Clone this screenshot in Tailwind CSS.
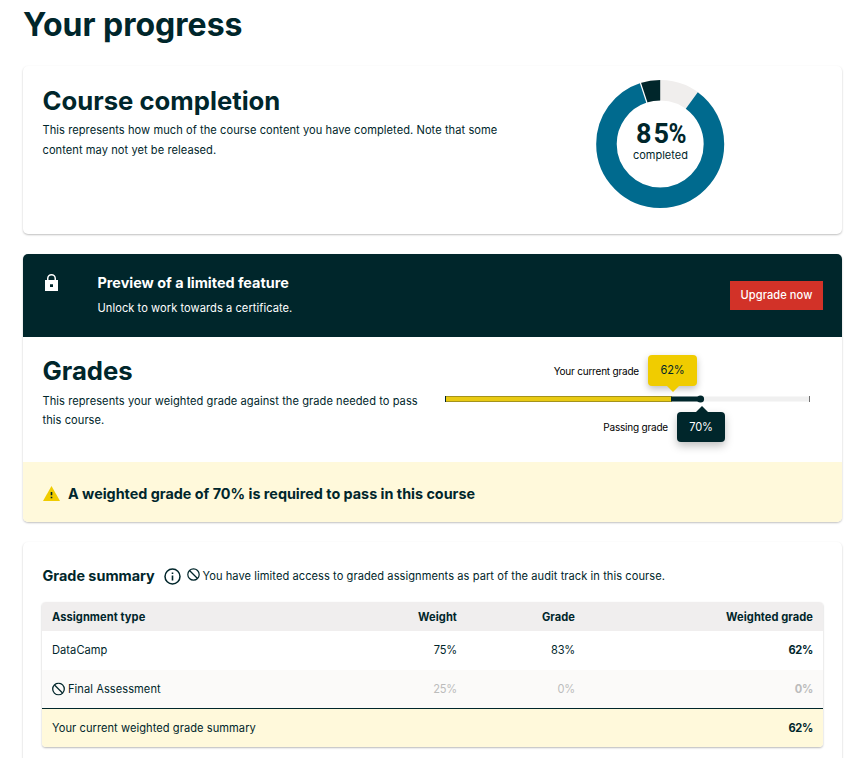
<!DOCTYPE html>
<html lang="en">
<head>
<meta charset="utf-8">
<title>Your progress</title>
<script src="https://cdn.jsdelivr.net/npm/@tailwindcss/browser@4"></script>
</head>
<body class="bg-white">
<main class="h-[758px] overflow-hidden bg-white pl-[23px] pr-[15px] font-['Inter',sans-serif] text-[11.1px] tracking-[0.06px] text-[#00262b]">
  <h1 class="h-[66px] pt-[5px] text-[32px] leading-[40px] font-bold tracking-normal whitespace-nowrap">Your progress</h1>

  <section class="flex h-[168px] rounded-[5px] bg-white pl-[19.5px] shadow-[0_1px_2px_rgba(0,0,0,0.25)]">
    <div class="w-[480px] pt-[19px]">
      <h2 class="text-[25.7px] leading-[32px] font-bold tracking-normal whitespace-nowrap">Course completion</h2>
      <p class="mt-[3px] leading-[20px] whitespace-nowrap">This represents how much of the course content you have completed. Note that some<br>content may not yet be released.</p>
    </div>
    <svg class="mt-[14px] ml-[73.5px] h-[128px] w-[128px] overflow-visible" viewBox="-64 -64 128 128">
      <g fill="none" stroke-width="20.5">
        <circle cx="0.200" r="53.75" stroke="#f0eeed"/>
        <circle r="53.75" stroke="#006a8e" pathLength="100" stroke-dasharray="85 15" stroke-dashoffset="-10" transform="translate(0.200 0) rotate(-90)"/>
        <circle r="53.75" stroke="#00262b" pathLength="100" stroke-dasharray="5 95" stroke-dashoffset="-95" transform="translate(0.200 0) rotate(-90)"/>
      </g>
      <path d="M-13 -41 L-19.900 -62" stroke="#fff" stroke-width="1.2"/>
      <text x="-24 -6.500" y="-1" fill="#00262b" class="font-['Roboto'] text-[27px] font-bold tracking-normal">85<tspan x="8.500" textLength="18" lengthAdjust="spacingAndGlyphs">%</tspan></text>
      <text x="0.400" y="15" text-anchor="middle" fill="#00262b" class="text-[11px] tracking-normal">completed</text>
    </svg>
  </section>

  <section class="mt-[20px] h-[268px] rounded-[5px] bg-white shadow-[0_1px_2px_rgba(0,0,0,0.25)]">
    <div class="flex h-[83px] rounded-t-[5px] bg-[#00262b] pr-[19px] text-white">
      <svg class="mt-[20px] ml-[22px] h-[17px] w-[13px] shrink-0" viewBox="0 0 13 17">
        <path fill-rule="evenodd" fill="#fff" d="M0 6H2V4.400a4.500 4.400 0 0 1 9 0V6h2v11H0zM3.500 6h6V4.500a3 3 0 0 0-6 0zM5 10.200v2.900h3v-2.900z"/>
      </svg>
      <div class="ml-[39.5px] flex-1 pt-[19px]">
        <h3 class="text-[14.4px] leading-[20px] font-bold tracking-normal whitespace-nowrap">Preview of a limited feature</h3>
        <p class="mt-[5px] leading-[20px] whitespace-nowrap">Unlock to work towards a certificate.</p>
      </div>
      <button class="mt-[27px] h-[29px] w-[93px] bg-[#d23228] font-medium whitespace-nowrap">Upgrade now</button>
    </div>
    <div class="flex h-[125px] pl-[19.5px]">
      <div class="w-[390px] pt-[18px]">
        <h2 class="text-[25.7px] leading-[32px] font-bold tracking-normal">Grades</h2>
        <p class="mt-[4.5px] leading-[19.5px] whitespace-nowrap">This represents your weighted grade against the grade needed to pass<br>this course.</p>
      </div>
      <div class="relative mt-[9px] ml-[12.5px] h-[107px] w-[365px]">
        <svg class="absolute inset-0 h-[107px] w-[365px]" viewBox="445 346 365 107">
          <path fill="#f0f0f0" d="M671 396.500h139v5H671z"/>
          <path fill="#e9ca13" stroke="#a4931c" stroke-width="1" d="M445.500 396.500h226v5h-226z"/>
          <path fill="#00262b" d="M445 396h1v6h-1zM671 396.500h30v5h-30z"/>
          <path fill="#707070" d="M809 396h1v6h-1z"/>
          <circle cx="700.500" cy="399" r="3.600" fill="#00262b"/>
        </svg>
        <span class="absolute top-[16px] right-[171px] text-[10px] leading-[18px] tracking-[-0.2px] whitespace-nowrap text-black">Your current grade</span>
        <div class="absolute top-[9px] left-[203px] flex h-[31px] w-[49px] items-center justify-center rounded-[4px] bg-[#f0cc00] tracking-[-0.2px] shadow-[0_3px_7px_rgba(0,0,0,0.25)]">62%
          <svg class="absolute top-[30px] left-[18px] h-[7px] w-[14px]" viewBox="0 0 14 7"><path fill="#f0cc00" d="M0 0h14L7 7z"/></svg>
        </div>
        <span class="absolute top-[72px] right-[142px] text-[10px] leading-[18px] tracking-[-0.2px] whitespace-nowrap text-black">Passing grade</span>
        <div class="absolute top-[66px] left-[232px] flex h-[30px] w-[48px] items-center justify-center rounded-[4px] bg-[#00262b] tracking-[-0.2px] text-white shadow-[0_4px_8px_rgba(0,0,0,0.25)]">70%
          <svg class="absolute -top-[6px] left-[18px] h-[7px] w-[14px]" viewBox="0 0 14 7"><path fill="#00262b" d="M0 7h14L7 0z"/></svg>
        </div>
      </div>
    </div>
    <div class="flex h-[60px] items-center rounded-b-[5px] bg-[#fff9db] pt-[4px] pl-[20px]">
      <svg class="h-[15px] w-[17px] -translate-y-px" viewBox="0 0 17 15"><path fill="#f0cc00" d="M8.500 0 17 15H0z"/><path fill="#00262b" d="M7.700 6h1.600v3.300H7.700zM7.700 10.700h1.600v1.600H7.700z"/></svg>
      <h3 class="ml-[8px] text-[14.37px] leading-[20px] font-bold tracking-normal whitespace-nowrap">A weighted grade of 70% is required to pass in this course</h3>
    </div>
  </section>

  <section class="mt-[20px] h-[240px] rounded-t-[5px] bg-white px-[19px] pt-[23px] shadow-[0_1px_2px_rgba(0,0,0,0.25)]">
    <div class="flex h-[22px] items-center">
      <h3 class="w-[122px] pl-[0.5px] text-[14.4px] font-bold tracking-normal whitespace-nowrap">Grade summary</h3>
      <svg class="h-[17px] w-[17px] shrink-0" viewBox="0 0 17 17"><circle cx="8.500" cy="8.500" r="7.500" fill="none" stroke="#00262b" stroke-width="1.500"/><path fill="#00262b" d="M7.700 4.500h1.600v1.600H7.700zM7.700 7.500h1.600v5H7.700z"/></svg>
      <svg class="ml-[6px] h-[13px] w-[13px] shrink-0 -translate-y-[2px]" viewBox="0 0 13 13"><circle cx="6.500" cy="6.500" r="5.700" fill="none" stroke="#00262b" stroke-width="1.200"/><path stroke="#00262b" stroke-width="1.200" d="M2.500 2.500l8 8"/></svg>
      <p class="ml-[2.5px] leading-[20px] whitespace-nowrap">You have limited access to graded assignments as part of the audit track in this course.</p>
    </div>
    <table class="mt-[15px] w-[781px] table-fixed border-separate border-spacing-0 overflow-hidden rounded-[4px] text-right leading-[18px] shadow-[0_1px_2px_rgba(0,0,0,0.28)]">
      <colgroup><col class="w-[300px]"><col class="w-[125px]"><col class="w-[118px]"><col class="w-[238px]"></colgroup>
      <thead class="bg-[#f0eeee] font-bold">
        <tr class="h-[29px]"><th class="pt-px pl-[10px] text-left">Assignment type</th><th class="pt-px pr-[10px]">Weight</th><th class="pt-px pr-[10px]">Grade</th><th class="pt-px pr-[10px]">Weighted grade</th></tr>
      </thead>
      <tbody>
        <tr class="h-[39px]"><td class="pb-px pl-[10px] text-left">DataCamp</td><td class="pr-[10px] pb-px tracking-[-0.2px]">75%</td><td class="pr-[10px] pb-px tracking-[-0.2px]">83%</td><td class="pr-[10px] pb-px font-bold tracking-[-0.3px]">62%</td></tr>
        <tr class="h-[38px] bg-[#fbfaf9] text-[#bcbcbc]">
          <td class="pl-[10px] text-left text-[#00262b]"><div class="flex items-center"><svg class="mr-[3px] h-[13px] w-[13px] -translate-y-[0.5px]" viewBox="0 0 13 13"><circle cx="6.500" cy="6.500" r="5.800" fill="none" stroke="#00262b" stroke-width="1.300"/><path stroke="#00262b" stroke-width="1.300" d="M2.500 2.500l8 8"/></svg>Final Assessment</div></td>
          <td class="pr-[10px] tracking-[-0.2px]">25%</td><td class="pr-[10px] tracking-[-0.2px]">0%</td><td class="pr-[10px] font-bold tracking-[-0.3px]">0%</td></tr>
      </tbody>
      <tfoot class="bg-[#fff9db]">
        <tr class="h-[39px]"><td colspan="3" class="border-t border-[#00262b] pl-[10px] text-left">Your current weighted grade summary</td><td class="border-t border-[#00262b] pr-[10px] font-bold tracking-[-0.3px]">62%</td></tr>
      </tfoot>
    </table>
  </section>
</main>
</body>
</html>
